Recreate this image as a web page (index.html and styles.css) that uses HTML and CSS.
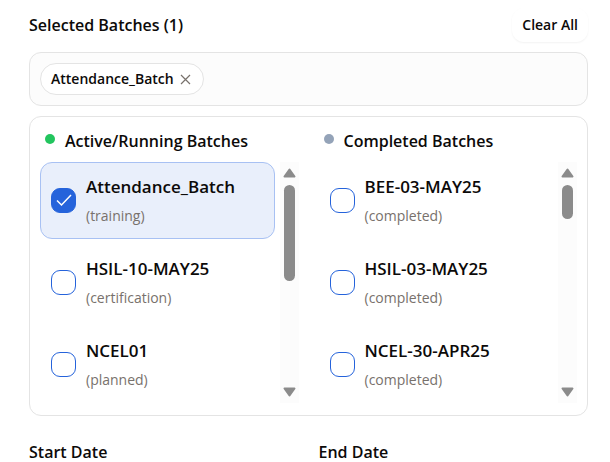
FILE: index.html
```html
<!DOCTYPE html>
<html lang="en">
<head>
<meta charset="utf-8">
<meta name="viewport" content="width=device-width, initial-scale=1">
<title>Batches</title>
<link rel="stylesheet" href="styles.css">
</head>
<body>
<main class="form">
  <header class="head">
    <h2 class="title">Selected Batches (1)</h2>
    <button class="clear" type="button">Clear All</button>
  </header>

  <div class="chips">
    <span class="chip">Attendance_Batch
      <button class="chip-close" type="button" aria-label="Remove">
        <svg width="11" height="11" viewBox="0 0 11 11"><path d="M1 1l9 9M10 1l-9 9"/></svg>
      </button>
    </span>
  </div>

  <div class="panel">
    <section class="column">
      <h3 class="column-title"><span class="dot dot-active"></span>Active/Running Batches</h3>
      <div class="scroller">
        <div class="list">
          <label class="row row-selected"><input class="check" type="checkbox" checked><span class="info"><span class="name">Attendance_Batch</span><span class="status">(training)</span></span></label>
          <label class="row"><input class="check" type="checkbox"><span class="info"><span class="name">HSIL-10-MAY25</span><span class="status">(certification)</span></span></label>
          <label class="row"><input class="check" type="checkbox"><span class="info"><span class="name">NCEL01</span><span class="status">(planned)</span></span></label>
        </div>
        <div class="bar">
          <svg class="arrow" width="13" height="10" viewBox="0 0 13 10"><path d="M6.500 1.500L11.500 8.500H1.500Z"/></svg>
          <div class="track"><div class="thumb thumb-long"></div></div>
          <svg class="arrow" width="13" height="10" viewBox="0 0 13 10"><path d="M6.500 8.500L11.500 1.500H1.500Z"/></svg>
        </div>
      </div>
    </section>
    <section class="column">
      <h3 class="column-title"><span class="dot dot-done"></span>Completed Batches</h3>
      <div class="scroller">
        <div class="list">
          <label class="row"><input class="check" type="checkbox"><span class="info"><span class="name">BEE-03-MAY25</span><span class="status">(completed)</span></span></label>
          <label class="row"><input class="check" type="checkbox"><span class="info"><span class="name">HSIL-03-MAY25</span><span class="status">(completed)</span></span></label>
          <label class="row"><input class="check" type="checkbox"><span class="info"><span class="name">NCEL-30-APR25</span><span class="status">(completed)</span></span></label>
        </div>
        <div class="bar">
          <svg class="arrow" width="13" height="10" viewBox="0 0 13 10"><path d="M6.500 1.500L11.500 8.500H1.500Z"/></svg>
          <div class="track"><div class="thumb thumb-short"></div></div>
          <svg class="arrow" width="13" height="10" viewBox="0 0 13 10"><path d="M6.500 8.500L11.500 1.500H1.500Z"/></svg>
        </div>
      </div>
    </section>
  </div>

  <div class="dates">
    <h3 class="date-title">Start Date</h3>
    <h3 class="date-title">End Date</h3>
  </div>
</main>
</body>
</html>
```
FILE: styles.css
```css
* {
  box-sizing: border-box;
}

body {
  margin: 0;
  background: #fff;
  color: #0c0a09;
  font-family: "Segoe UI", "Open Sans", "Noto Sans", sans-serif;
  font-size: 16px;
  line-height: 24px;
}

h2,
h3 {
  margin: 0;
  font-size: 16px;
  font-weight: 600;
}

button {
  font: inherit;
  color: inherit;
  cursor: pointer;
}

.form {
  padding: 8px 22px 0 29px;
}

.head {
  display: flex;
  align-items: center;
  justify-content: space-between;
  margin-bottom: 10px;
}

.clear {
  height: 34px;
  padding: 0 10px;
  border: 0;
  border-radius: 12px;
  background: #fff;
  box-shadow: 0 1px 2px rgba(0, 0, 0, 0.05);
  font-size: 14px;
  font-weight: 600;
}

.chips {
  display: flex;
  padding: 10px;
  margin-bottom: 10px;
  border: 1px solid #e4e4e4;
  border-radius: 12px;
  background: #fcfcfc;
}

.chip {
  display: flex;
  align-items: center;
  gap: 6px;
  height: 32px;
  padding: 0 12px 0 10px;
  border: 1px solid #e4e4e4;
  border-radius: 16px;
  background: #fff;
  font-size: 14px;
  font-weight: 600;
}

.chip-close {
  display: flex;
  padding: 0;
  border: 0;
  background: none;
}

.chip-close path {
  fill: none;
  stroke: #78716c;
  stroke-width: 1.2;
}

.panel {
  display: grid;
  grid-template-columns: 1fr 1fr;
  gap: 20px;
  padding: 10px 10px 12px;
  margin-bottom: 26px;
  border: 1px solid #e4e4e4;
  border-radius: 12px;
}

.column-title {
  display: flex;
  gap: 10px;
  padding: 2px 5px 9px;
  font-weight: 570;
}

.dot {
  width: 10px;
  height: 10px;
  margin-top: 5px;
  border-radius: 50%;
}

.dot-active {
  background: #22c55e;
}

.dot-done {
  background: #94a3b8;
}

.scroller {
  display: flex;
  gap: 5px;
}

.list {
  display: grid;
  flex: 1;
  gap: 5px;
}

.row {
  display: flex;
  align-items: center;
  gap: 10px;
  height: 77px;
  padding: 0 10px;
  border: 1px solid transparent;
  border-radius: 12px;
}

.row-selected {
  border-color: #a8c1f3;
  background: #e9effb;
}

.check {
  appearance: none;
  width: 25px;
  height: 25px;
  margin: 0;
  border: 1px solid #2563db;
  border-radius: 9px;
  background: #fff;
}

.check:checked {
  background: #2563db url("data:image/svg+xml,%3Csvg xmlns='http://www.w3.org/2000/svg' viewBox='0 0 23 23'%3E%3Cpath d='M5 11.500L9.500 16L19 6' fill='none' stroke='white' stroke-width='1.500'/%3E%3C/svg%3E") center / 23px 23px no-repeat;
}

.info {
  display: grid;
  gap: 5px;
  padding-top: 2px;
}

.name {
  font-size: 17px;
  font-weight: 570;
}

.status {
  color: #78716c;
  font-size: 14px;
}

.bar {
  display: flex;
  flex-direction: column;
  align-items: center;
  width: 19px;
  padding: 6px 0;
  background: #fcfcfc;
}

.arrow {
  fill: #8b8b8b;
  stroke: #8b8b8b;
  stroke-width: 2;
  stroke-linejoin: round;
}

.track {
  flex: 1;
  padding-top: 7px;
}

.thumb {
  width: 11px;
  border-radius: 6px;
  background: #8b8b8b;
}

.thumb-long {
  height: 96px;
}

.thumb-short {
  height: 34px;
}

.dates {
  display: grid;
  grid-template-columns: 1fr 1fr;
  gap: 20px;
  line-height: 20px;
}
```
